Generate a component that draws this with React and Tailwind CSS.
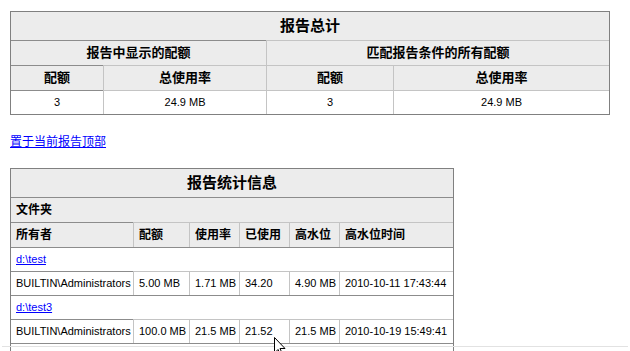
import React from 'react';

const font = { fontFamily: '"Liberation Sans", "Noto Sans CJK SC", sans-serif' };

// colours picked off the screenshot
const head = 'bg-[#ececec]';
const hline = 'border-t border-[#8c8c8c]';
const vline = 'border-l border-[#c4c4c4]';

function SummaryTable() {
  return (
    <table className="border-separate border-spacing-0 border border-[#808080] w-[600px] table-fixed text-black">
      <colgroup>
        <col className="w-[92px]" />
        <col className="w-[163px]" />
        <col className="w-[127px]" />
        <col className="w-[216px]" />
      </colgroup>
      <tbody>
        <tr className={`h-[28px] ${head}`}>
          <th colSpan={4} className="text-[15px] font-bold text-center p-0">报告总计</th>
        </tr>
        <tr className={`h-[25px] ${head}`}>
          <th colSpan={2} className={`${hline} text-[13px] font-bold text-center p-0`}>报告中显示的配额</th>
          <th colSpan={2} className={`${hline} ${vline} text-[13px] font-bold text-center p-0`}>匹配报告条件的所有配额</th>
        </tr>
        <tr className={`h-[25px] ${head}`}>
          <th className={`${hline} text-[13px] font-bold text-center p-0`}>配额</th>
          <th className={`${hline} ${vline} text-[13px] font-bold text-center p-0`}>总使用率</th>
          <th className={`${hline} ${vline} text-[13px] font-bold text-center p-0`}>配额</th>
          <th className={`${hline} ${vline} text-[13px] font-bold text-center p-0`}>总使用率</th>
        </tr>
        <tr className="h-[24px] bg-white text-[11px]">
          <td className={`${hline} text-center p-0`}>3</td>
          <td className={`${hline} ${vline} text-center p-0`}>24.9 MB</td>
          <td className={`${hline} ${vline} text-center p-0`}>3</td>
          <td className={`${hline} ${vline} text-center p-0`}>24.9 MB</td>
        </tr>
      </tbody>
    </table>
  );
}

const folders = [
  { path: 'd:\\test', owner: 'BUILTIN\\Administrators', quota: '5.00 MB', rate: '1.71 MB', used: '34.20', high: '4.90 MB', time: '2010-10-11 17:43:44' },
  { path: 'd:\\test3', owner: 'BUILTIN\\Administrators', quota: '100.0 MB', rate: '21.5 MB', used: '21.52', high: '21.5 MB', time: '2010-10-19 15:49:41' },
];

function StatsTable() {
  const th = `${hline} text-[12px] font-bold text-left px-[5px] py-0`;
  const td = `${hline} text-[11px] text-left px-[5px] py-0 whitespace-nowrap`;
  return (
    <table className="border-separate border-spacing-0 border border-[#808080] w-[444px] table-fixed text-black">
      <colgroup>
        <col className="w-[122px]" />
        <col className="w-[56px]" />
        <col className="w-[50px]" />
        <col className="w-[50px]" />
        <col className="w-[50px]" />
        <col className="w-[114px]" />
      </colgroup>
      <tbody>
        <tr className={`h-[28px] ${head}`}>
          <th colSpan={6} className="text-[15px] font-bold text-center p-0">报告统计信息</th>
        </tr>
        <tr className={`h-[25px] ${head}`}>
          <th colSpan={6} className={th}>文件夹</th>
        </tr>
        <tr className={`h-[25px] ${head}`}>
          <th className={th}>所有者</th>
          <th className={`${th} ${vline}`}>配额</th>
          <th className={`${th} ${vline}`}>使用率</th>
          <th className={`${th} ${vline}`}>已使用</th>
          <th className={`${th} ${vline}`}>高水位</th>
          <th className={`${th} ${vline}`}>高水位时间</th>
        </tr>
        {folders.map((f) => (
          <React.Fragment key={f.path}>
            <tr className="h-[24px] bg-white">
              <td colSpan={6} className={td}>
                <a href="#" className="text-[#0000ff] underline">{f.path}</a>
              </td>
            </tr>
            <tr className="h-[24px] bg-white">
              <td className={td}>{f.owner}</td>
              <td className={`${td} ${vline}`}>{f.quota}</td>
              <td className={`${td} ${vline}`}>{f.rate}</td>
              <td className={`${td} ${vline}`}>{f.used}</td>
              <td className={`${td} ${vline}`}>{f.high}</td>
              <td className={`${td} ${vline}`}>{f.time}</td>
            </tr>
          </React.Fragment>
        ))}
        <tr className="h-[24px] bg-white">
          <td colSpan={6} className={td}></td>
        </tr>
      </tbody>
    </table>
  );
}

export default function App() {
  return (
    <div className="relative w-[630px] h-[351px] overflow-hidden bg-white" style={font}>
      <div className="pt-[11px] pl-[10px]">
        <SummaryTable />
        <div className="mt-[20px] h-[14px] leading-[14px] text-[12px]">
          <a href="#" className="text-[#0000ff] underline">置于当前报告顶部</a>
        </div>
        <div className="mt-[19px]">
          <StatsTable />
        </div>
      </div>

      {/* frame edge along the bottom */}
      <div className="absolute left-[2px] right-[2px] top-[346px] h-px bg-[#e2e2e2]" />

      {/* mouse pointer */}
      <svg className="absolute left-[274px] top-[337px]" width="12" height="19" viewBox="0 0 12 19">
        <path d="M0.5 0.5 L0.5 16 L4 12.5 L6.5 18 L8.5 17 L6 11.5 L11 11.5 Z" fill="#fff" stroke="#000" strokeWidth="1" />
      </svg>
    </div>
  );
}
